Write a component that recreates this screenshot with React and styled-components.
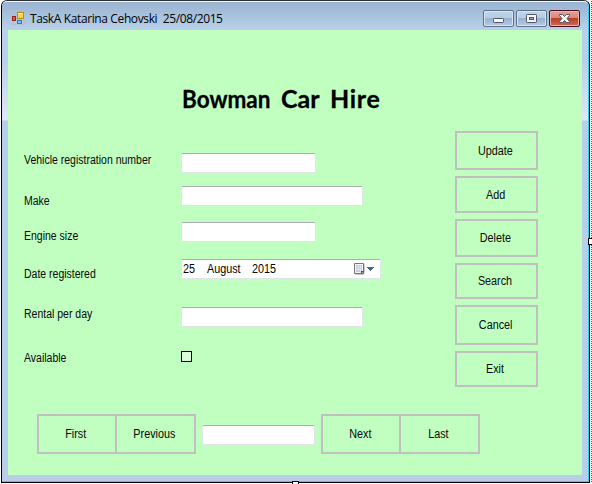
import React from "react";
import styled, { createGlobalStyle } from "styled-components";

const GlobalStyle = createGlobalStyle`
  * { box-sizing: border-box; }
  body { margin: 0; background: #fff; overflow: hidden; }
`;

const Designer = styled.main`
  position: relative;
  width: 592px;
  height: 484px;
  overflow: hidden;
  background: #fff;
  font: 12px/14px "Liberation Sans", Arial, sans-serif;
  color: #080808;
`;

const FormWindow = styled.section`
  width: 589px;
  height: 483px;
  margin-left: 1px;
  border: 1px solid #000;
  border-top-color: #2b3038;
  border-radius: 6px 6px 0 0;
  background: #b9d1ea;
  overflow: hidden;
`;

const Frame = styled.div`
  height: 481px;
  border: solid #f4f8fc;
  border-width: 1px 1px 1px 0;
  border-right-color: #27d3f2;
  border-bottom-color: #27d3f2;
  border-radius: 5px 5px 0 0;
  padding: 0 6px 6px;
  background: linear-gradient(#99b4d1 0, #b9d1ea 28px, #bad0ea 60px, #dfe8f6 118px, #b9cfe9 119px, #b9cfe9 100%);
`;

const TitleBar = styled.header`
  display: flex;
  align-items: flex-start;
  height: 28px;
  padding-left: 3px;
  padding-right: 2px;
`;

const AppMark = styled.svg`
  margin-top: 9px;
`;

const Caption = styled.span`
  margin: 9px auto 0 5px;
  font: 12px/16px "Open Sans", "Noto Sans", sans-serif;
  letter-spacing: -0.38px;
  white-space: pre;
  color: #000;
`;

const WindowControls = styled.div`
  display: flex;
  gap: 2px;
  margin-top: 8px;
`;

const ControlButton = styled.button`
  display: flex;
  align-items: center;
  justify-content: center;
  width: 31px;
  height: 17px;
  padding: 0;
  border: 1px solid ${(p) => (p.$danger ? "#481022" : "#5c708c")};
  border-radius: 2px;
  box-shadow: inset 0 0 0 1px ${(p) => (p.$danger ? "#e9b3aa" : "#d8e6f4")};
  background: ${(p) =>
    p.$danger
      ? "linear-gradient(#e4a296 0, #d98878 46%, #b93f27 50%, #cf6b50 100%)"
      : "linear-gradient(#c2d5e9 0, #b6cce3 46%, #98b2cf 50%, #b5cce5 100%)"};
`;

const Body = styled.div`
  display: grid;
  grid-template-columns: 173px 274px 83px;
  grid-template-rows: 384px 61px;
  width: 574px;
  height: 445px;
  background: #c0ffc0;
`;

const Labels = styled.div`
  display: flex;
  flex-direction: column;
  align-items: flex-start;
  padding: 123px 0 0 16px;
`;

const Label = styled.label`
  height: 14px;
  margin-bottom: ${(p) => p.$gap}px;
  white-space: nowrap;
  transform: scaleX(0.875);
  transform-origin: left;
`;

const Fields = styled.div`
  display: flex;
  flex-direction: column;
  align-items: flex-start;
`;

const Title = styled.h1`
  display: flex;
  height: 38px;
  margin: 49px 0 36px 1px;
  font: 700 25px/38px "Comic Sans MS", Lato, sans-serif;
  white-space: pre;
  color: #000;
  -webkit-text-stroke: 0.3px #000;
`;

const Word = styled.span`
  width: ${(p) => p.$width}px;
  letter-spacing: ${(p) => p.$track}px;
  transform: scaleX(${(p) => p.$scale || 1});
  transform-origin: left;
`;

const TextBox = styled.input`
  display: block;
  width: ${(p) => p.$width}px;
  height: 20px;
  margin: 0 0 ${(p) => p.$gap || 0}px;
  padding: 0 2px;
  border: 1px solid #e2e3ea;
  border-top-color: #abadb3;
  border-radius: 2px;
  background: #fff;
  outline: none;
`;

const DatePicker = styled.div`
  display: flex;
  align-items: center;
  width: 200px;
  height: 20px;
  margin-bottom: 28px;
  padding: 0 5px 0 1px;
  border: 1px solid #e2e3ea;
  border-top-color: #abadb3;
  border-radius: 2px;
  background: #fff;
`;

const DatePart = styled.span`
  width: ${(p) => p.$width}px;
  color: #000;
  transform: scaleX(0.9);
  transform-origin: left;
`;

const PickerIcon = styled.svg`
  margin-left: auto;
`;

const CheckBox = styled.span`
  width: 11px;
  height: 11px;
  margin-top: 24px;
  border: 1px solid #000;
  background: #dcffdc;
`;

const Actions = styled.div`
  display: flex;
  flex-direction: column;
  gap: 6px;
  padding-top: 101px;
`;

const FlatButton = styled.button`
  flex: none;
  width: ${(p) => p.$width || 83}px;
  height: ${(p) => p.$height || 40}px;
  margin: 0 0 0 ${(p) => (p.$joined ? -2 : 0)}px;
  padding: 0 2px 0 0;
  border: 2px solid #c0c0c0;
  background: transparent;
  font: inherit;
  color: #080808;
`;

const ButtonText = styled.span`
  display: inline-block;
  transform: scaleX(0.9);
`;

const Navigation = styled.nav`
  grid-column: 1 / -1;
  display: flex;
  align-items: flex-start;
  gap: 6px;
  padding-left: 29px;
`;

const Pair = styled.div`
  display: flex;
`;

const Position = styled.div`
  padding-top: 11px;
`;

const DottedEdge = styled.div`
  position: absolute;
  top: 0;
  right: 0;
  width: 1px;
  height: 482px;
  background: repeating-linear-gradient(#fff 0 1px, #555 1px 2px);
`;

const Handle = styled.span`
  position: absolute;
  left: ${(p) => p.$x}px;
  top: ${(p) => p.$y}px;
  width: 7px;
  height: 7px;
  border: 1px solid #000;
  background: #fff;
`;

const labels = [
  ["Vehicle registration number", 27],
  ["Make", 21],
  ["Engine size", 24],
  ["Date registered", 26],
  ["Rental per day", 30],
  ["Available", 0],
];

const actions = [
  ["Update", 39],
  ["Add", 37],
  ["Delete", 38],
  ["Search", 36],
  ["Cancel", 40],
  ["Exit", 36],
];

function AppIcon() {
  return (
    <AppMark width="14" height="14" viewBox="0 0 14 14">
      <path d="M.5 3.5v-3h5M.5 10.5v3h5M9 13.5h4.5V9" fill="none" stroke="#b9bfc6" />
      <rect x="1.5" y="5.5" width="3" height="4" fill="#e05a45" stroke="#98201a" />
      <rect x="6.5" y="1.5" width="6" height="6" fill="#ffd34d" stroke="#c08a10" />
      <path d="M7 2.5h5" stroke="#fff0a6" />
      <rect x="6.5" y="9.5" width="4" height="3" fill="#8cc0fa" stroke="#3b70c8" />
    </AppMark>
  );
}

function CalendarIcon() {
  return (
    <PickerIcon width="22" height="14" viewBox="0 0 22 14">
      <path d="M2.5 12.5h8l1-2v-8" fill="none" stroke="#c8c8c8" />
      <path d="M1.5 1.5h9v10h-9z" fill="#f7f5f4" stroke="#7f706b" />
      <path d="M3 3h6v7H3z" fill="#b6c5da" />
      <path d="M3 5h6M3 7.3h6M5 3v7M7.3 3v7" stroke="#edf2f9" strokeWidth=".7" />
      <path d="M8 12V9h3z" fill="#65544f" />
      <path d="M14 5h7v1h-1v1h-1v1h-1v1h-1V8h-1V7h-1V6h-1z" fill="#44638d" />
    </PickerIcon>
  );
}

function PushButton({ children, ...props }) {
  return (
    <FlatButton {...props}>
      <ButtonText>{children}</ButtonText>
    </FlatButton>
  );
}

export default function App() {
  return (
    <Designer>
      <GlobalStyle />
      <FormWindow>
        <Frame>
          <TitleBar>
            <AppIcon />
            <Caption>{"TaskA Katarina Cehovski  25/08/2015"}</Caption>
            <WindowControls>
              <ControlButton aria-label="Minimise">
                <svg width="11" height="11" viewBox="0 0 11 11">
                  <rect x=".5" y="5.5" width="10" height="4" rx=".7" fill="#f7f7f7" stroke="#535666" />
                </svg>
              </ControlButton>
              <ControlButton aria-label="Maximise">
                <svg width="11" height="9" viewBox="0 0 11 9">
                  <rect x=".5" y=".5" width="10" height="8" rx=".7" fill="#f7f7f7" stroke="#535666" />
                  <rect x="3.5" y="3.5" width="4" height="2" fill="#8fa9c8" stroke="#535666" />
                </svg>
              </ControlButton>
              <ControlButton aria-label="Close" $danger>
                <svg width="11" height="9" viewBox="0 0 11 9">
                  <path d="M.5.5h3l2 2 2-2h3v1l-2.5 3 2.5 3v1h-3l-2-2-2 2h-3v-1l2.5-3-2.5-3z" fill="#f7f7f7" stroke="#535666" />
                </svg>
              </ControlButton>
            </WindowControls>
          </TitleBar>
          <Body>
            <Labels>
              {labels.map(([text, gap]) => (
                <Label key={text} $gap={gap}>{text}</Label>
              ))}
            </Labels>
            <Fields>
              <Title>
                <Word $width={99} $track={0} $scale={0.9}>{"Bowman "}</Word>
                <Word $width={49} $track={0}>{"Car "}</Word>
                <Word $width={50} $track={0.7}>Hire</Word>
              </Title>
              <TextBox $width={135} $gap={13} />
              <TextBox $width={182} $gap={16} />
              <TextBox $width={135} $gap={17} />
              <DatePicker>
                <DatePart $width={24}>25</DatePart>
                <DatePart $width={45}>August</DatePart>
                <DatePart $width={30}>2015</DatePart>
                <CalendarIcon />
              </DatePicker>
              <TextBox $width={182} />
              <CheckBox role="checkbox" aria-checked="false" />
            </Fields>
            <Actions>
              {actions.map(([text, height]) => (
                <PushButton key={text} $height={height}>{text}</PushButton>
              ))}
            </Actions>
            <Navigation>
              <Pair>
                <PushButton $width={80}>First</PushButton>
                <PushButton $width={81} $joined>Previous</PushButton>
              </Pair>
              <Position>
                <TextBox $width={113} />
              </Position>
              <Pair>
                <PushButton $width={80}>Next</PushButton>
                <PushButton $width={81} $joined>Last</PushButton>
              </Pair>
            </Navigation>
          </Body>
        </Frame>
      </FormWindow>
      <DottedEdge />
      <Handle $x={588} $y={238} />
      <Handle $x={292} $y={481} />
    </Designer>
  );
}
